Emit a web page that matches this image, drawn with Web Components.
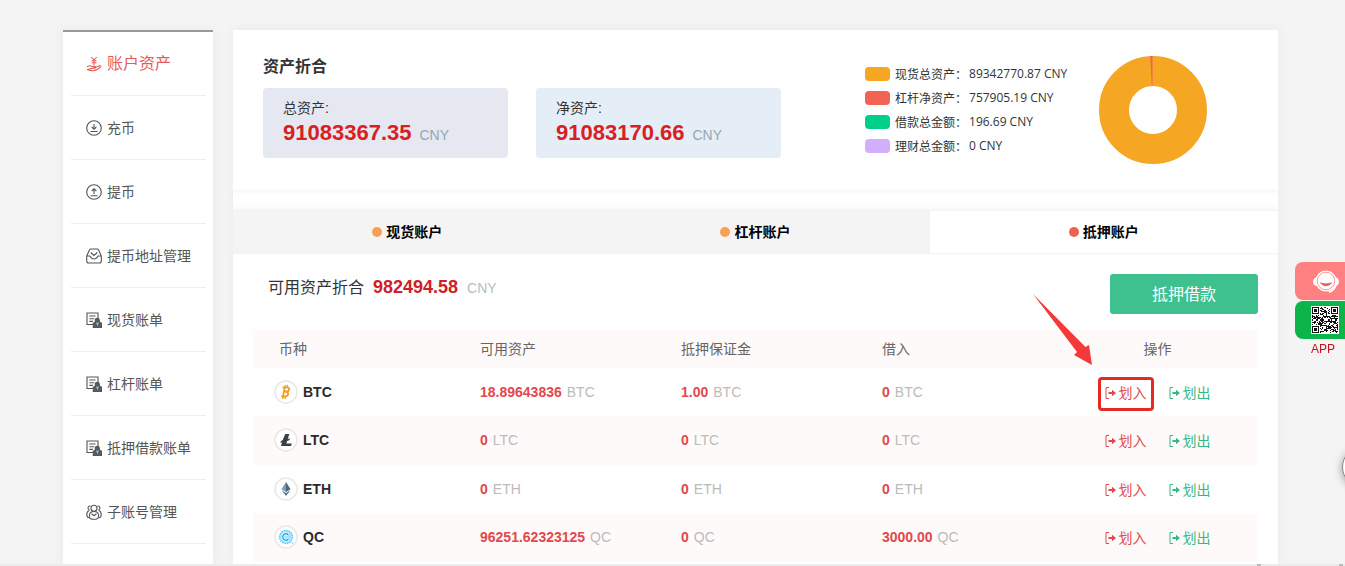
<!DOCTYPE html>
<html lang="zh-CN">
<head>
<meta charset="utf-8">
<title>账户资产</title>
<style>
  body { margin: 0; background: #f4f4f4; color: #333; font: 14px/20px "Liberation Sans", "Noto Sans CJK SC", sans-serif; }
</style>
</head>
<body>
<account-page>
  <side-menu slot="side">
    <side-item icon="hand" active>账户资产</side-item>
    <side-item icon="down">充币</side-item>
    <side-item icon="up">提币</side-item>
    <side-item icon="tray">提币地址管理</side-item>
    <side-item icon="bill">现货账单</side-item>
    <side-item icon="bill">杠杆账单</side-item>
    <side-item icon="bill">抵押借款账单</side-item>
    <side-item icon="users">子账号管理</side-item>
  </side-menu>
  <asset-summary>
    <asset-box amount="91083367.35" tone="#e5e8f0">总资产:</asset-box>
    <asset-box amount="91083170.66" tone="#e5eef7">净资产:</asset-box>
    <legend-item slot="legend" color="#f5a623" value="89342770.87 CNY">现货总资产</legend-item>
    <legend-item slot="legend" color="#f06355" value="757905.19 CNY">杠杆净资产</legend-item>
    <legend-item slot="legend" color="#00d08c" value="196.69 CNY">借款总金额</legend-item>
    <legend-item slot="legend" color="#d3aeff" value="0 CNY">理财总金额</legend-item>
    <donut-chart slot="chart"></donut-chart>
  </asset-summary>
  <account-tabs>
    <account-tab>现货账户</account-tab>
    <account-tab>杠杆账户</account-tab>
    <account-tab active>抵押账户</account-tab>
  </account-tabs>
  <available-bar amount="982494.58">可用资产折合</available-bar>
  <coin-table></coin-table>
</account-page>
<float-dock></float-dock>

<script>
const define = (name, html) => customElements.define(name, class extends HTMLElement {
  connectedCallback() {
    if (this.shadowRoot) return;
    const root = this.attachShadow({ mode: "open" });
    root.innerHTML = typeof html === "function" ? html(this) : html;
  }
});

define("account-page", `
  <style>
    :host { display: flex; flex-direction: column; min-height: 100vh; box-sizing: border-box; padding-top: 30px; }
    .cols { flex: 1; display: flex; gap: 20px; padding: 0 67px 0 63px; }
    main { flex: 1; min-width: 0; background: #fff; box-shadow: 0 0 10px #e8e8e8; }
    footer { height: 2px; background: #ececec; display: flex; justify-content: flex-end; gap: 78px; padding-right: 2px; }
    svg { display: block; width: 4px; height: 2px; }
  </style>
  <div class="cols"><slot name="side"></slot><main><slot></slot></main></div>
  <footer><svg viewBox="0 0 4 2"><path d="M1 0v2M3 0v2" stroke="#888"/></svg><svg viewBox="0 0 4 2"><path d="M1 0v2M3 0v2" stroke="#888"/></svg></footer>`);

define("side-menu", `
  <style>
    :host { display: block; flex: 0 0 150px; box-sizing: border-box; border-top: 2px solid #999; background: #fff; padding: 0 7px 0 8px; box-shadow: 0 0 10px #e8e8e8; }
  </style>
  <nav aria-label="账户"><slot></slot></nav>`);

const MENU_ICONS = {
  hand: `<path d="M5.300 1l2.700 3 2.700-3M8 4v5.500M5.500 4.700h5M5.500 6.800h5"/><path d="M1 11c1.800-1.600 3.600-1.600 5.200-.5h2.600c1.100 0 1.100 1.700 0 1.700H6.300M9.500 11.400l3.800-1.700c1.200-.4 1.900.7 1 1.500-2.500 2.600-4.500 3.500-7.300 3.500-2.400 0-3.600-1-6-1z"/>`,
  down: `<circle cx="8" cy="8" r="7.300"/><path d="M8 4v5M5.700 7L8 9.300 10.300 7M4.500 11.500h7"/>`,
  up: `<circle cx="8" cy="8" r="7.300"/><path d="M8 10V4.700M5.700 7L8 4.700 10.300 7M4.500 11.800h7"/>`,
  tray: `<path d="M.7 8L3.400 2Q3.800 1 5 1h6q1.200 0 1.600 1l2.700 6v5q0 2-2 2H2.700q-2 0-2-2zM1 8h2.600c1 0 1.200 3 4.400 3s3.400-3 4.400-3H15M4.700 4.500L8 7.500l3.300-3"/>`,
  bill: `<path d="M7 12.500H1V1h11v5M3.300 4h6.200M3.300 6.700h5M3.300 9.400h3.700"/><path d="M9.300 10V8.500q0-2.200 2-2.200t2 2.200V10l2.200 1.200V15.500H7.300v-4.300z" fill="#555c66"/><path d="M10 11.200h3M11.500 11.200v2.500" stroke="#ccc" stroke-width=".8"/>`,
  users: `<circle cx="8" cy="4.200" r="3"/><path d="M4.500 2.200C1.700 1.500 1.300 5 3.500 6.200M11.500 2.200c2.800-.7 3.200 2.800 1 4M3.300 6.200C1.300 7.200.8 9 .8 10.500q0 3 2.200 3.300M12.700 6.200c2 1 2.500 2.800 2.500 4.300q0 3-2.200 3.300M3.500 10.500Q4 7.500 8 7.500t4.500 3v2.200Q12.500 15.300 8 15.300t-4.500-2.600zM5.500 9.800l2.500 2 2.500-2"/>`
};
define("side-item", el => `
  <style>
    :host { display: block; border-bottom: 1px solid #eee; }
    a { display: flex; align-items: center; gap: 5px; height: 63px; padding-left: 15px; color: #555; text-decoration: none; white-space: nowrap; }
    svg { flex: none; width: 16px; height: 16px; fill: none; stroke: currentColor; stroke-width: 1.100; }
    :host([active]) a { color: #e85a5a; font-size: 16px; }
  </style>
  <a href="#"><svg viewBox="0 0 16 16" aria-hidden="true">${MENU_ICONS[el.getAttribute("icon")]}</svg><slot></slot></a>`);

define("asset-summary", `
  <style>
    :host { display: flex; justify-content: space-between; box-sizing: border-box; height: 160px; padding: 26px 71px 0 30px; box-shadow: 0 2px 4px #f5f5f5; }
    h2 { margin: 0; padding: 1px 0 11px; font-size: 16px; line-height: 20px; }
    .boxes { display: flex; gap: 28px; }
    .right { display: flex; gap: 28px; }
    .legend { width: 206px; display: flex; flex-direction: column; gap: 4px; margin-top: 8px; }
  </style>
  <section><h2>资产折合</h2><div class="boxes"><slot></slot></div></section>
  <div class="right"><div class="legend"><slot name="legend"></slot></div><slot name="chart"></slot></div>`);

define("asset-box", el => `
  <style>
    :host { display: block; box-sizing: border-box; width: 245px; height: 70px; padding: 10px 20px; border-radius: 4px; background: ${el.getAttribute("tone")}; }
    p { margin: 0; }
    .sum { line-height: 30px; color: #95a5b2; }
    b { font-size: 22px; color: #d8201f; margin-right: 8px; }
  </style>
  <p><slot></slot></p><p class="sum"><b>${el.getAttribute("amount")}</b>CNY</p>`);

define("legend-item", el => `
  <style>
    :host { display: flex; align-items: center; height: 20px; white-space: nowrap; font: 12px/20px "Noto Sans CJK SC", sans-serif; }
    i { width: 25px; height: 14px; margin-right: 5px; border-radius: 4px; background: ${el.getAttribute("color")}; }
    .value { margin-left: 2px; font: 12px/20px "Open Sans", sans-serif; }
  </style>
  <i></i><span><slot></slot>：</span><span class="value">${el.getAttribute("value")}</span>`);

define("donut-chart", `
  <style>:host { display: block; width: 108px; height: 108px; } svg { display: block; }</style>
  <svg width="108" height="108" viewBox="0 0 108 108" role="img" aria-label="资产分布">
    <circle cx="54" cy="54" r="39" fill="none" stroke="#f5a623" stroke-width="30"/>
    <path d="M53.500 0H51.200L52.900 30h.6z" fill="#f06355"/>
  </svg>`);

define("account-tabs", `
  <style>:host { display: flex; height: 44px; margin-top: 20px; box-shadow: 0 -2px 6px #f5f5f5; }</style>
  <slot></slot>`);

define("account-tab", `
  <style>
    :host { flex: 1; display: flex; }
    button { flex: 1; display: flex; align-items: center; justify-content: center; gap: 4px; padding: 0; border: solid #f3f3f3; border-width: 1px 0; background: #f4f4f4; color: #000; font: bold 14px/20px "Liberation Sans", "Noto Sans CJK SC", sans-serif; }
    i { width: 10px; height: 10px; border-radius: 50%; background: #f8a055; }
    :host([active]) button { background: #fff; }
    :host([active]) i { background: #f06050; }
  </style>
  <button type="button"><i></i><slot></slot></button>`);

define("available-bar", el => `
  <style>
    :host { display: flex; justify-content: space-between; padding: 20px 20px 16px 35px; }
    p { margin: 3px 0 0; font-size: 16px; line-height: 20px; color: #333; }
    b { font-size: 18px; color: #d02024; margin: 0 9px; }
    small { font-size: 14px; color: #bbb; }
    button { width: 148px; height: 40px; padding: 2px 0 0; border: 0; border-radius: 3px; background: #3fc08f; color: #fff; font: 16px/20px "Liberation Sans", "Noto Sans CJK SC", sans-serif; }
  </style>
  <p><slot></slot><b>${el.getAttribute("amount")}</b><small>CNY</small></p><button type="button">抵押借款</button>`);

const COINS = {
  BTC: `<g fill="none" stroke="#f29c1f" stroke-width="1.800"><path d="M8.500 7.300h4.300c3.400 0 2.900 4.200-.3 4.200h-1.700c4.800 0 4.200 4.900-.2 4.900H7.300M10.700 7.300L9 16.400"/><path d="M11.300 4.800v2M13.600 4.900l-.3 2M9 16.800l-.3 2.200M11.400 16.800l-.3 2.200" stroke-width="1.300"/></g>`,
  LTC: `<path d="M11.300 6h4l-1.600 5 2.200-.8-.6 2-2.200.8-.7 2.500h5.300l-.6 2.500H7l1-3.700-1.700.6.600-2 1.700-.6z" fill="#3b3f45"/>`,
  ETH: `<path d="M12 5l4.500 7.300L12 15z" fill="#496580"/><path d="M12 5l-4.500 7.300L12 15z" fill="#8299ad"/><path d="M7.500 13.300L12 16l4.500-2.700L12 19z" fill="#5c7891"/>`,
  QC: `<circle cx="12" cy="12" r="6.500" fill="#a5e2fb" stroke="#60c8f5" stroke-width="1.500" stroke-dasharray="1.500 1"/><path d="M14.300 9.800a3.200 3.200 0 1 0 0 4.400" fill="none" stroke="#fff" stroke-width="3"/><path d="M14.300 9.800a3.200 3.200 0 1 0 0 4.400" fill="none" stroke="#27a9e8" stroke-width="1.500"/><circle cx="18.500" cy="18" r=".8" fill="#5cc6f2"/>`
};
const ROWS = [
  ["BTC", "18.89643836", "1.00", "0"],
  ["LTC", "0", "0", "0"],
  ["ETH", "0", "0", "0"],
  ["QC", "96251.62323125", "0", "3000.00"]
];
const MOVE = `<svg viewBox="0 0 11 12" aria-hidden="true"><path d="M4 .5H1v11h3" fill="none" stroke="currentColor"/><path d="M3.500 5.100H7V2.800L11 6 7 9.200V6.900H3.500z" fill="currentColor"/></svg>`;
define("coin-table", () => `
  <style>
    :host { display: block; padding: 0 20px 2px; }
    table { width: 100%; table-layout: fixed; border-collapse: separate; border-spacing: 0; }
    th, td { padding: 0 0 0 26px; text-align: left; font-weight: normal; }
    th { height: 38px; background: #fefaf9; color: #666; }
    td { height: 48px; color: #bbb; }
    tr:nth-child(even) td { background: #fefaf9; border-bottom: 1px solid #fefaf9; }
    td b { color: #e2484d; margin-right: 5px; }
    td:first-child { padding-left: 21px; }
    th:last-child, td:last-child { padding-left: 0; text-align: center; }
    .coin { display: flex; align-items: center; gap: 5px; color: #2b2b2b; font-weight: bold; }
    .coin svg { width: 24px; height: 24px; }
    .acts { display: flex; justify-content: center; gap: 22px; padding-top: 2px; }
    a { position: relative; display: flex; align-items: center; gap: 3px; color: #e2484d; text-decoration: none; }
    a svg { width: 11px; height: 12px; }
    .out { color: #35b883; }
    .mark { position: absolute; inset: -6px -7px -8px; border: 3px solid #e62a20; border-radius: 4px; pointer-events: none; }
    a .arrow { position: absolute; left: -72px; bottom: 37px; width: 60px; height: 72px; pointer-events: none; }
  </style>
  <table>
    <thead><tr><th>币种</th><th>可用资产</th><th>抵押保证金</th><th>借入</th><th>操作</th></tr></thead>
    <tbody>${ROWS.map(([c, ...v], i) => `<tr>
      <td><span class="coin"><svg viewBox="0 0 24 24" aria-hidden="true"><circle cx="12" cy="12" r="11" fill="#fff" stroke="#e9e7e7" stroke-width="1.500"/>${COINS[c]}</svg>${c}</span></td>
      ${v.map(x => `<td><b>${x}</b>${c}</td>`).join("")}
      <td><div class="acts"><a href="#">${MOVE}划入${i ? "" : `<span class="mark"></span><svg class="arrow" viewBox="0 0 60 72" aria-hidden="true"><path d="M0 0L52.500 53 56 51 59 71 41 61 44 58z" fill="#f4393a"/></svg>`}</a><a class="out" href="#">${MOVE}划出</a></div></td>
    </tr>`).join("")}</tbody>
  </table>`);

/* 25-module code: three finder squares, the rest filled from a small generator */
function qrPath() {
  let s = 7, d = "";
  const finder = (x, y) => {
    const m = Math.max(Math.abs(x - 3), Math.abs(y - 3));
    return m > 4 ? null : m === 3 || m < 2;
  };
  for (let y = 0; y < 25; y++) for (let x = 0; x < 25; x++) {
    s = (s * 1103515245 + 12345) % 2147483648;
    const f = finder(x, y) ?? finder(24 - x, y) ?? finder(x, 24 - y);
    if (f ?? s / 2147483648 > .48) d += `M${x} ${y}h1v1h-1z`;
  }
  return d;
}
define("float-dock", () => `
  <style>
    :host { position: fixed; right: 0; top: 262px; width: 50px; display: block; }
    a { display: flex; height: 38px; padding-left: 16px; align-items: center; border-radius: 8px 0 0 8px; background: #ff8080; }
    .app { background: #0cb44a; margin-top: 1px; }
    p { margin: 0; padding-left: 16px; font-size: 12px; line-height: 20px; color: #c8101c; }
    .bubble { position: fixed; right: -37px; top: 447px; width: 40px; height: 40px; box-sizing: border-box; border: 1px solid #888; border-radius: 50%; background: #fff; box-shadow: 0 2px 8px #999; padding: 0; }
    svg { display: block; flex: none; }
  </style>
  <a href="#" aria-label="客服"><svg width="30" height="28" viewBox="0 0 30 28"><path d="M6 10Q2 11 2 15t5 4M24 10q4 1 4 5t-5 4" fill="#fff"/><circle cx="15" cy="14" r="10.500" fill="#fff"/><circle cx="15" cy="14" r="8.800" fill="none" stroke="#ff9a9a"/><path d="M9.500 16q5.500 5.500 11 0-5.500 2-11 0z" fill="#f05a5a" stroke="#f05a5a"/><path d="M25 18q-2 6-7 7" stroke="#fff" stroke-width="1.800" fill="none"/></svg></a>
  <a class="app" href="#" aria-label="APP"><svg width="28" height="28" viewBox="-1 -1 27 27" shape-rendering="crispEdges"><rect x="-1" y="-1" width="27" height="27" fill="#fff"/><path d="${qrPath()}" fill="#111"/></svg></a>
  <p>APP</p>
  <button class="bubble" type="button" aria-label="更多"></button>`);
</script>
</body>
</html>
